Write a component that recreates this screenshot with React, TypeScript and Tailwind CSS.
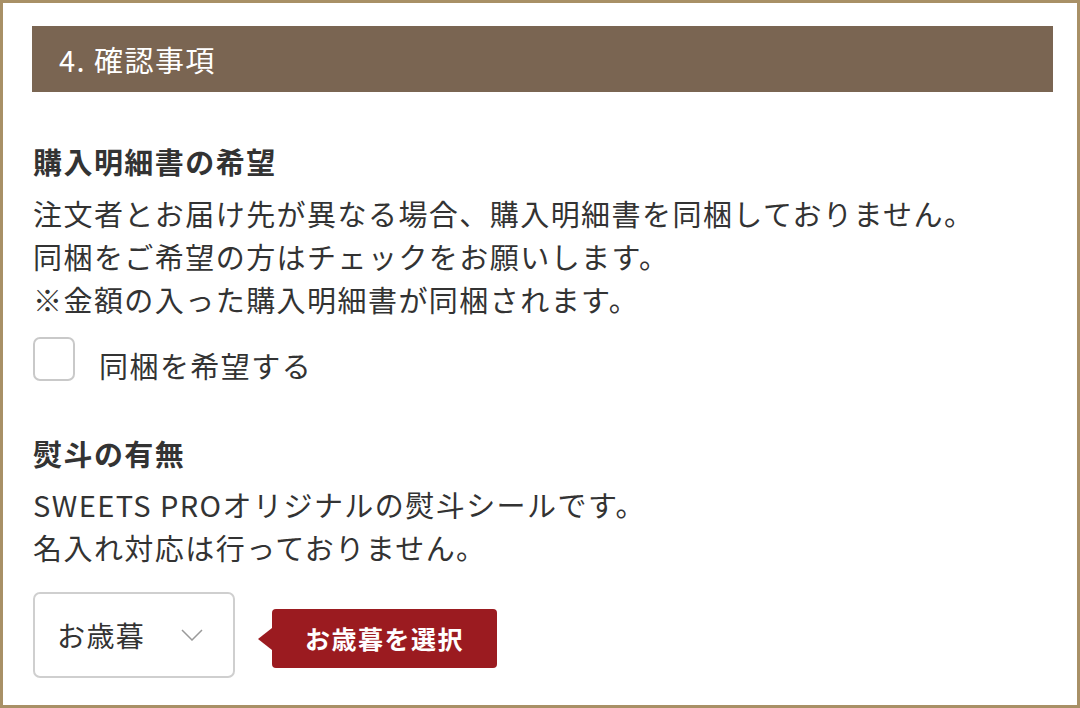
import { useState } from 'react'

const FONT = { fontFamily: '"Noto Sans CJK JP", "Noto Sans", sans-serif' }

export default function App() {
  const [checked, setChecked] = useState(false)

  return (
    <div style={FONT} className="h-[708px] w-[1080px] border-[3px] border-[#a89066] bg-white text-[#333]">
      {/* Section header */}
      <div className="ml-[29px] mr-[24px] mt-[23px] flex h-[66px] items-center bg-[#7a6552] pl-[27px]">
        <h2 className="text-[29px] leading-none tracking-[0.05em] text-white">4. 確認事項</h2>
      </div>

      <div className="pl-[30px]">
        {/* 購入明細書 */}
        <h3 className="mt-[48px] text-[29px] font-bold leading-[43px] tracking-[0.05em]">購入明細書の希望</h3>
        <p className="mt-[9px] text-[29px] leading-[43px] tracking-[0.05em]">
          注文者とお届け先が異なる場合、購入明細書を同梱しておりません。
          <br />
          同梱をご希望の方はチェックをお願いします。
          <br />
          ※金額の入った購入明細書が同梱されます。
        </p>

        <label className="mt-[16px] flex h-[44px] cursor-pointer items-start gap-[24px]">
          <span
            onClick={() => setChecked(!checked)}
            className="flex h-[44px] w-[42px] items-center justify-center rounded-[7px] border-2 border-[#c9c9c9] bg-white"
          >
            {checked && (
              <svg width="24" height="24" viewBox="0 0 24 24" fill="none" stroke="#7a6552" strokeWidth="3">
                <path d="M4 12l5 5 11-11" />
              </svg>
            )}
          </span>
          <span className="pt-[12px] text-[29px] leading-[32px] tracking-[0.05em]">同梱を希望する</span>
        </label>

        {/* 熨斗 */}
        <h3 className="mt-[51px] text-[29px] font-bold leading-[43px] tracking-[0.05em]">熨斗の有無</h3>
        <p className="mt-[8px] text-[29px] leading-[43px] tracking-[0.05em]">
          SWEETS PROオリジナルの熨斗シールです。
          <br />
          名入れ対応は行っておりません。
        </p>

        <div className="mt-[23px] flex items-start">
          <div className="flex h-[86px] w-[202px] items-center justify-between rounded-[7px] border-2 border-[#cfcfcf] bg-white pl-[22px] pr-[30px]">
            <span className="text-[28px] leading-none tracking-[0.05em]">お歳暮</span>
            <svg width="22" height="12" viewBox="0 0 22 12" fill="none" stroke="#9a9a9a" strokeWidth="1.5">
              <path d="M1 1l10 10L21 1" />
            </svg>
          </div>

          <div className="relative ml-[37px] mt-[17px] flex h-[59px] w-[225px] items-center justify-center rounded-[4px] bg-[#9b1b20]">
            <span className="absolute left-[-14px] top-1/2 h-0 w-0 -translate-y-1/2 border-y-[11px] border-r-[14px] border-y-transparent border-r-[#9b1b20]" />
            <span className="text-[25px] font-bold leading-none tracking-[0.06em] text-white">お歳暮を選択</span>
          </div>
        </div>
      </div>
    </div>
  )
}
